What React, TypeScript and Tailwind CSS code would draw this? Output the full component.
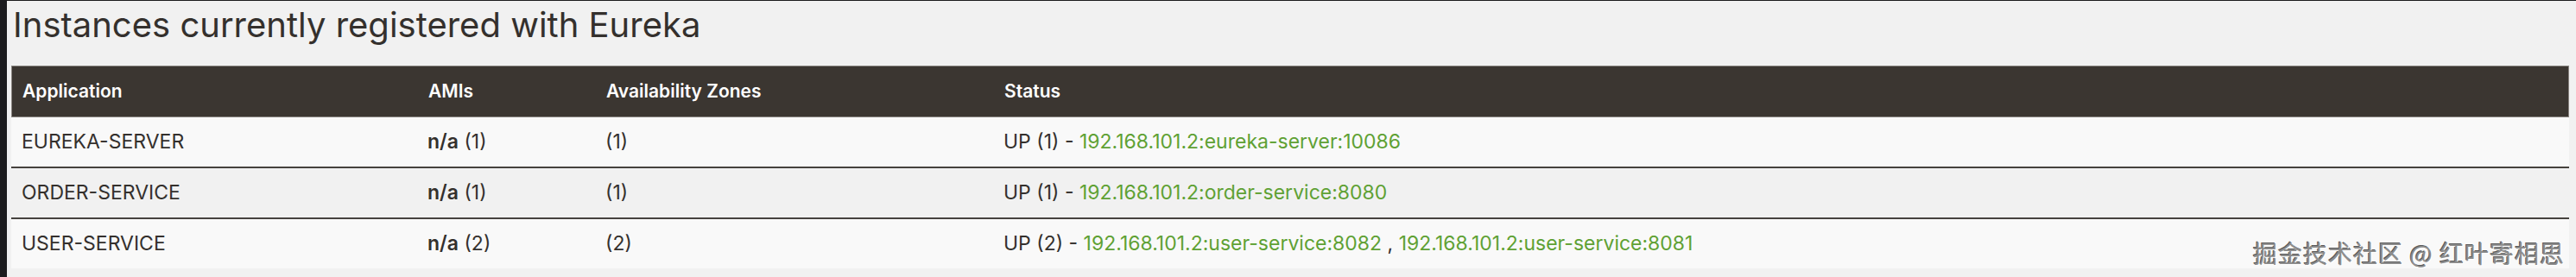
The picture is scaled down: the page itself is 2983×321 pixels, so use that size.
import React from "react";

const rows = [
  { app: "EUREKA-SERVER", ami: "(1)", zones: "(1)", up: "UP (1) - ", links: ["192.168.101.2:eureka-server:10086"], bg: "bg-[#f9f9f9]" },
  { app: "ORDER-SERVICE", ami: "(1)", zones: "(1)", up: "UP (1) - ", links: ["192.168.101.2:order-service:8080"], bg: "bg-[#f1f1f1]" },
  { app: "USER-SERVICE", ami: "(2)", zones: "(2)", up: "UP (2) - ", links: ["192.168.101.2:user-service:8082", "192.168.101.2:user-service:8081"], bg: "bg-[#f9f9f9]" },
];

export default function App() {
  return (
    <div className="flex w-[2983px] h-[321px] overflow-hidden bg-[#1c1c1e] font-['Inter','DejaVu_Sans',sans-serif] text-[#34302d]">
      <div className="w-[8px] shrink-0 bg-[#1c1c1e]" />
      <div className="relative flex-1 mt-[1px] bg-[#f1f1f1] pl-[5px] pr-[8px]">
        <h2 className="h-[75px] pl-[2px] pt-[3px] text-[40px] leading-[50px] font-normal text-[#34302d]">
          Instances currently registered with Eureka
        </h2>
        <div className="w-full">
          <div className="grid grid-cols-[470px_206px_461px_1fr] h-[60px] items-center bg-[#3b3631] border border-[#8a8682] text-white text-[21px] font-semibold">
            <div className="pl-[12px]">Application</div>
            <div className="pl-[12px]">AMIs</div>
            <div className="pl-[12px]">Availability Zones</div>
            <div className="pl-[12px]">Status</div>
          </div>
          {rows.map((r, i) => (
            <div
              key={r.app}
              className={`grid grid-cols-[470px_206px_461px_1fr] items-center text-[23px] ${r.bg} ${i === 0 ? "h-[57px]" : "h-[59px] border-t-2 border-[#46423e]"}`}
            >
              <div className="pl-[12px] text-[#34302d]">{r.app}</div>
              <div className="pl-[12px]">
                <span className="font-semibold">n/a</span> {r.ami}
              </div>
              <div className="pl-[12px]">{r.zones}</div>
              <div className="pl-[12px]">
                {r.up}
                {r.links.map((l, j) => (
                  <React.Fragment key={l}>
                    {j > 0 && " , "}
                    <a className="text-[#5fa134]">{l}</a>
                  </React.Fragment>
                ))}
              </div>
            </div>
          ))}
        </div>
        <div className="absolute right-[13px] bottom-[14px] text-[28px] tracking-[1px] leading-none text-[#8c8c8c] font-['Noto_Sans_CJK_SC',sans-serif] [text-shadow:1px_1px_0_#ffffff,-1px_-1px_0_#5a5a5a]">
          掘金技术社区 @ 红叶寄相思
        </div>
      </div>
    </div>
  );
}
